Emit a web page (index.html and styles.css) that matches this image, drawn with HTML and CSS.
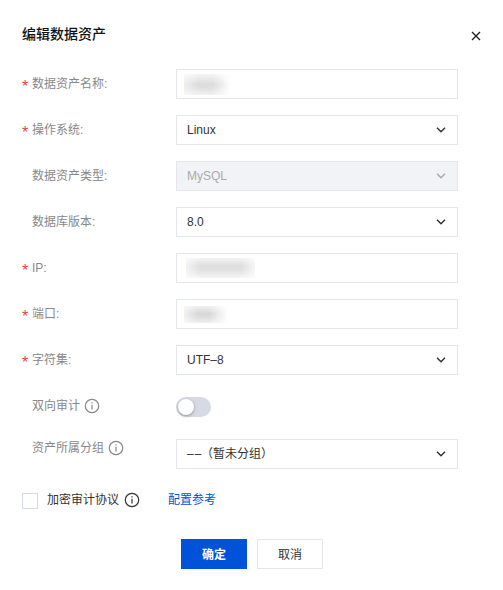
FILE: index.html
```html
<!DOCTYPE html>
<html lang="zh-CN">
<head>
  <meta charset="UTF-8" />
  <meta name="viewport" content="width=device-width, initial-scale=1.0"/>
  <title>编辑数据资产</title>
  <link rel="stylesheet" href="styles.css">
</head>
<body>
  <div class="dialog">
    <div class="dialog-header">
      <h1>编辑数据资产</h1>
      <button type="button" class="close" aria-label="关闭">
        <svg width="10" height="10" viewBox="0 0 10 10"><path d="M1 1L9 9M9 1L1 9" /></svg>
      </button>
    </div>

    <form id="assetForm">
      <div class="form-item">
        <label class="required">数据资产名称:</label>
        <div class="control"><span class="mask mask-name"></span></div>
      </div>
      <div class="form-item">
        <label class="required">操作系统:</label>
        <div class="control">
          <span>Linux</span>
          <svg class="arrow" width="10" height="6" viewBox="0 0 10 6"><path d="M1 0.8L5 4.8L9 0.8" /></svg>
        </div>
      </div>
      <div class="form-item">
        <label>数据资产类型:</label>
        <div class="control disabled">
          <span>MySQL</span>
          <svg class="arrow" width="10" height="6" viewBox="0 0 10 6"><path d="M1 0.8L5 4.8L9 0.8" /></svg>
        </div>
      </div>
      <div class="form-item">
        <label>数据库版本:</label>
        <div class="control">
          <span>8.0</span>
          <svg class="arrow" width="10" height="6" viewBox="0 0 10 6"><path d="M1 0.8L5 4.8L9 0.8" /></svg>
        </div>
      </div>
      <div class="form-item">
        <label class="required">IP:</label>
        <div class="control"><span class="mask mask-ip"></span></div>
      </div>
      <div class="form-item">
        <label class="required">端口:</label>
        <div class="control"><span class="mask mask-port"></span></div>
      </div>
      <div class="form-item">
        <label class="required">字符集:</label>
        <div class="control">
          <span>UTF–8</span>
          <svg class="arrow" width="10" height="6" viewBox="0 0 10 6"><path d="M1 0.8L5 4.8L9 0.8" /></svg>
        </div>
      </div>
      <div class="form-item switch-item">
        <label>双向审计
          <svg class="info" width="16" height="16" viewBox="0 0 16 16"><circle cx="8" cy="8" r="6.7" /><path d="M8 6.8V11.6M8 4.2V5.5" /></svg>
        </label>
        <div class="switch"></div>
      </div>
      <div class="form-item group-item">
        <label>资产所属分组
          <svg class="info" width="16" height="16" viewBox="0 0 16 16"><circle cx="8" cy="8" r="6.7" /><path d="M8 6.8V11.6M8 4.2V5.5" /></svg>
        </label>
        <div class="control">
          <span class="group-value"><span class="dashes">––</span>（暂未分组）</span>
          <svg class="arrow" width="10" height="6" viewBox="0 0 10 6"><path d="M1 0.8L5 4.8L9 0.8" /></svg>
        </div>
      </div>

      <div class="protocol">
        <span class="checkbox"></span>
        <span>加密审计协议</span>
        <svg class="info" width="16" height="16" viewBox="0 0 16 16"><circle cx="8" cy="8" r="6.7" /><path d="M8 6.8V11.6M8 4.2V5.5" /></svg>
        <a href="#">配置参考</a>
      </div>

      <div class="buttons">
        <button type="submit" class="btn primary">确定</button>
        <button type="button" class="btn">取消</button>
      </div>
    </form>
  </div>
</body>
</html>
```

FILE: styles.css
```css
* { margin: 0; padding: 0; box-sizing: border-box; }

body {
  font-family: "Liberation Sans", "Noto Sans CJK SC", sans-serif;
  font-size: 12px;
  line-height: 18px;
  color: #333;
  background: #fff;
}

svg {
  display: block;
  flex: none;
  fill: none;
  stroke: currentColor;
}

.dialog {
  width: 503px;
  height: 590px;
  padding: 24px 22px 0;
}

.dialog-header {
  display: flex;
  justify-content: space-between;
  height: 45px;
}

.dialog-header h1 {
  font-size: 14px;
  font-weight: 500;
  line-height: 20px;
  color: #111;
}

.close {
  width: 10px;
  height: 10px;
  margin-top: 7px;
  border: none;
  background: none;
  color: #222;
  cursor: pointer;
}

.close svg {
  stroke-width: 1.4;
}

.form-item {
  display: flex;
  align-items: center;
  height: 30px;
  margin-bottom: 16px;
}

label {
  display: flex;
  align-items: center;
  width: 154px;
  padding-left: 10px;
  color: #888;
}

label.required {
  padding-left: 0;
}

label.required::before {
  content: "*";
  width: 10px;
  height: 18px;
  font-family: "Liberation Sans", sans-serif;
  font-size: 16px;
  line-height: 23px;
  color: #e54545;
}

.control {
  display: flex;
  justify-content: space-between;
  align-items: center;
  width: 282px;
  height: 30px;
  padding: 0 11px 0 10px;
  border: 1px solid #e3e6ee;
}

.control.disabled {
  background: #f2f3f7;
  color: #aaa;
}

.arrow {
  stroke-width: 1.5;
}

/* blurred out values */
.mask {
  height: 20px;
}

.mask-name {
  width: 58px;
  height: 21px;
  margin-left: -3px;
  background: linear-gradient(90deg, rgba(255, 255, 255, 0.5), rgba(255, 255, 255, 0) 25%, rgba(255, 255, 255, 0) 50%, #fff 80%), linear-gradient(#f4f4f4, #dcdcdc 50%, #dfdfdf 65%, #f2f2f2);
}

.mask-ip {
  width: 69px;
  margin-left: -1px;
  background: linear-gradient(90deg, rgba(255, 255, 255, 0.6), rgba(255, 255, 255, 0) 20%, rgba(255, 255, 255, 0) 80%, rgba(255, 255, 255, 0.7)), linear-gradient(#f3f3f3, #dfdfdf 40%, #e1e1e1 60%, #f5f5f5);
}

.mask-port {
  width: 46px;
  height: 17px;
  margin-left: -3px;
  background: linear-gradient(90deg, rgba(255, 255, 255, 0.6), rgba(255, 255, 255, 0) 30%, rgba(255, 255, 255, 0) 55%, #fff 95%), linear-gradient(#f0f0f0, #d8d8d8 45%, #dadada 60%, #f0f0f0);
}

.info {
  margin-left: 4px;
  stroke-width: 1.2;
}

.switch-item {
  height: 30px;
  margin-bottom: 14px;
}

.switch {
  width: 35px;
  height: 20px;
  margin-top: 2px;
  padding: 2px;
  border-radius: 10px;
  background: #d5dae4;
}

.switch::before {
  content: "";
  display: block;
  width: 16px;
  height: 16px;
  border-radius: 50%;
  background: #fff;
  box-shadow: 0 1px 3px rgba(0, 0, 0, 0.35);
}

.group-item {
  align-items: flex-start;
  padding-top: 4px;
  height: 34px;
  margin-bottom: 21px;
}

.group-item label {
  height: 18px;
}

.group-value {
  display: flex;
  font-feature-settings: "halt";
}

.dashes {
  width: 20px;
  letter-spacing: 1px;
}

.protocol {
  display: flex;
  align-items: center;
  height: 20px;
}

.checkbox {
  width: 16px;
  height: 16px;
  margin: 2px 9px 0 0;
  border: 1px solid #d5dae4;
}

.protocol .info {
  margin-left: 5px;
}

.protocol a {
  margin-left: 28px;
  color: #0052d9;
  text-decoration: none;
}

.buttons {
  display: flex;
  gap: 10px;
  margin-top: 29px;
  padding-left: 159px;
}

.btn {
  width: 66px;
  height: 30px;
  padding-bottom: 2px;
  border: 1px solid #e3e6ee;
  background: #fff;
  font-family: inherit;
  font-size: 12px;
  color: #333;
  cursor: pointer;
}

.btn.primary {
  border-color: #0052d9;
  background: #0052d9;
  font-weight: 700;
  color: #fff;
}
```
